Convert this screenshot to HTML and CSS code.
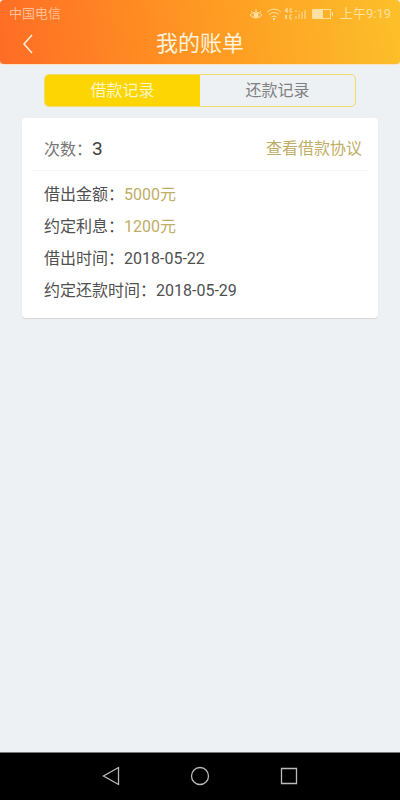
FILE: index.html
```html
<!DOCTYPE html>
<html lang="zh-CN">
<head>
<meta charset="utf-8">
<meta name="viewport" content="width=device-width, initial-scale=1">
<title>我的账单</title>
<link rel="stylesheet" href="styles.css">
</head>
<body>
<header class="top">
  <div class="status">
    <span>中国电信</span>
    <div class="status-right">
      <svg width="86" height="14" viewBox="0 0 86 14" aria-hidden="true">
        <g fill="none" stroke="currentColor">
          <path d="M1 8Q7 2 13 8Q7 14 1 8ZM2 4l1.500 1.500M12 4l-1.500 1.500M7 2v2.500"/>
          <path d="M18 5q7-6 14 0M20 7.500q5-4 10 0M22.500 10q2.500-2 5 0"/>
          <path d="M38 1l-2 3h3M38 1v5M43 2h-2v3h2v-1M36 8l2 4M38 8l-2 4M43 8h-2v4h2"/>
          <path d="M47 12v-3M50 12V7M53 12V5M56 12V3M47 5v-2M50 5V4"/>
          <path d="M63.500 2.500h18v9h-18zM83.500 5v4"/>
        </g>
        <circle cx="7" cy="8" r="2.500" fill="currentColor"/>
        <circle cx="25" cy="12" r="1.200" fill="currentColor"/>
        <path d="M64 3h10v8h-10z" fill="currentColor"/>
      </svg>
      <span>上午9:19</span>
    </div>
  </div>
  <div class="titlebar">
    <button class="back" type="button" aria-label="返回">
      <svg width="12" height="20" viewBox="0 0 12 20" aria-hidden="true"><path d="M10 1L2 10l8 9" fill="none" stroke="currentColor" stroke-width="1.500"/></svg>
    </button>
    <h1>我的账单</h1>
  </div>
</header>
<main>
  <div class="tabs" role="tablist">
    <button class="tab active" type="button" role="tab" aria-selected="true">借款记录</button>
    <button class="tab" type="button" role="tab" aria-selected="false">还款记录</button>
  </div>
  <section class="card">
    <div class="card-head">
      <span>次数：<span class="count">3</span></span>
      <a class="gold" href="#">查看借款协议</a>
    </div>
    <dl class="details">
      <div><dt>借出金额：</dt><dd class="gold">5000元</dd></div>
      <div><dt>约定利息：</dt><dd class="gold">1200元</dd></div>
      <div><dt>借出时间：</dt><dd>2018-05-22</dd></div>
      <div><dt>约定还款时间：</dt><dd>2018-05-29</dd></div>
    </dl>
  </section>
</main>
<nav class="system">
  <button type="button" aria-label="后退"><svg width="20" height="20" viewBox="0 0 20 20"><path d="M17.500 1.500v17L2.500 10z"/></svg></button>
  <button type="button" aria-label="主屏幕"><svg width="20" height="20" viewBox="0 0 20 20"><circle cx="10" cy="10" r="8.500"/></svg></button>
  <button type="button" aria-label="最近任务"><svg width="20" height="20" viewBox="0 0 20 20"><path d="M2.500 2.500h15v15h-15z"/></svg></button>
</nav>
</body>
</html>
```
FILE: styles.css
```css
* { box-sizing: border-box; }
body {
  margin: 0;
  min-height: 100vh;
  display: flex;
  flex-direction: column;
  background: #edf1f3;
  color: #505050;
  font: 16px/32px Roboto, "Noto Sans CJK SC", sans-serif;
}
button {
  margin: 0;
  padding: 0;
  border: 0;
  background: none;
  color: inherit;
  font: inherit;
}
svg { display: block; }
.top {
  padding-bottom: 4px;
  border-bottom: 1px solid #fbe3bd;
  border-radius: 4px;
  background: linear-gradient(80deg, #ff6c25, #ff9822 50%, #fcc02a);
  color: #fff2dc;
}
.status {
  display: flex;
  justify-content: space-between;
  padding: 0 9px;
  color: #ffc095;
  font-size: 13px;
  line-height: 28px;
}
.status-right {
  display: flex;
  align-items: center;
  gap: 5px;
  color: #ffe0a0;
}
.titlebar {
  display: grid;
  grid-template-columns: 56px 1fr 56px;
  align-items: center;
}
.back { display: grid; place-items: center; height: 32px; }
h1 {
  margin: 0;
  font-size: 22px;
  font-weight: 400;
  text-align: center;
}
main { flex: 1; padding: 9px 22px; }
.tabs {
  display: flex;
  margin: 0 22px 11px;
  border: 1px solid #f0dc68;
  border-radius: 5px;
  overflow: hidden;
}
.tab { flex: 1; padding-top: 1px; line-height: 30px; color: #808080; }
.tab.active { background: #fdd502; color: #fff6c8; }
.card {
  border-radius: 4px;
  background: #fff;
  box-shadow: 0 1px 1px #d4d6d8;
}
.card-head {
  display: flex;
  justify-content: space-between;
  margin: 0 10px;
  padding: 15px 6px 4px 12px;
  border-bottom: 1px solid #f6f6f6;
  color: #777;
}
.count { color: #404040; font-size: 19px; }
.gold { color: #bfae68; text-decoration: none; }
.details { margin: 0; padding: 8px 22px 11px; }
.details div { display: flex; }
.details dd { margin: 0; }
.system {
  display: flex;
  justify-content: center;
  gap: 69px;
  padding: 13px 0 14px;
  border-top: 1px solid #777;
  background: #000;
}
.system svg {
  fill: none;
  stroke: #bbb;
  stroke-width: 1.3;
}
```
